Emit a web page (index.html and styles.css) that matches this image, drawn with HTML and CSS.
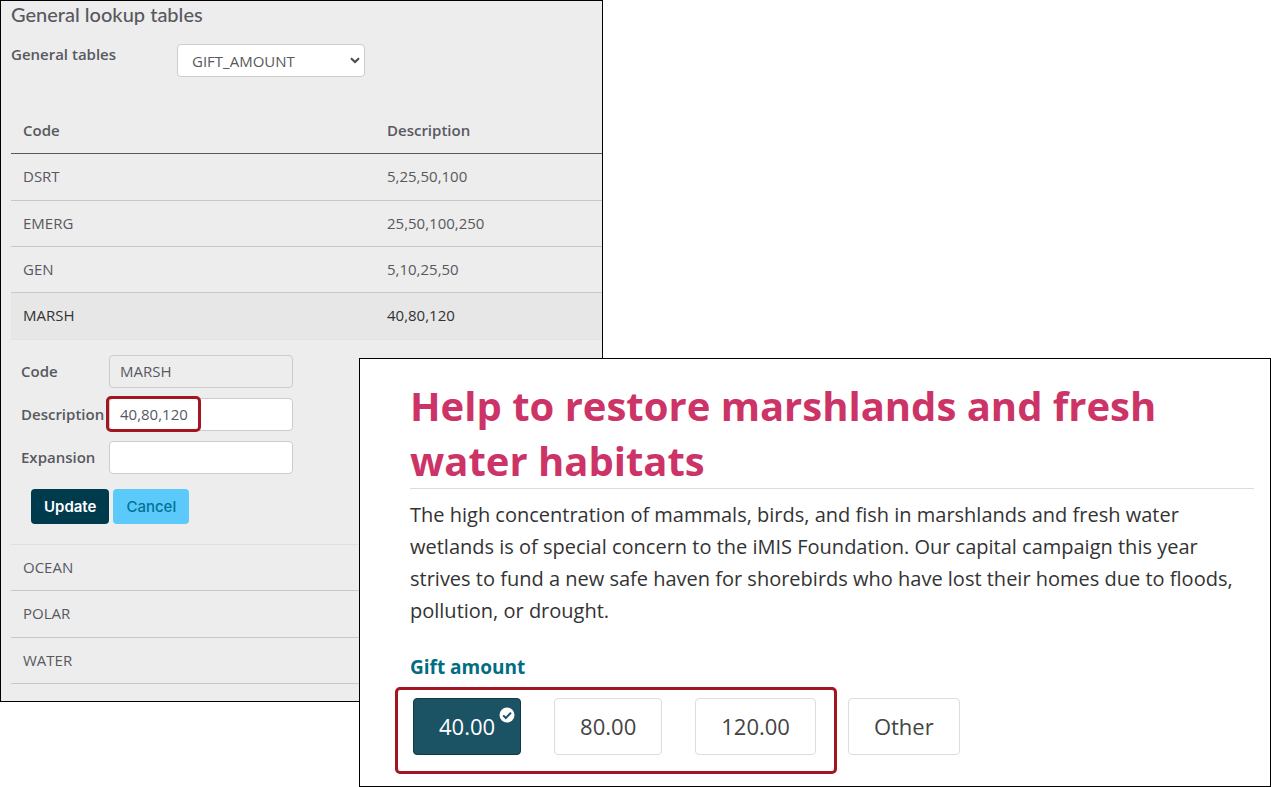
FILE: index.html
```html
<!DOCTYPE html>
<html lang="en">
<head>
<meta charset="utf-8">
<title>General lookup tables</title>
<link rel="stylesheet" href="styles.css">
</head>
<body>
<main class="stage">
  <section class="window admin">
    <h2 class="admin-title">General lookup tables</h2>
    <div class="picker">
      <label class="label" for="table-name">General tables</label>
      <div class="select-wrap">
        <select class="field select" id="table-name"><option>GIFT_AMOUNT</option></select>
        <svg class="chevron" viewBox="0 0 10 7" aria-hidden="true"><path d="M1 1.2 5 5l4-3.8"/></svg>
      </div>
    </div>
    <table class="lookup">
      <thead>
        <tr><th class="code-col">Code</th><th>Description</th></tr>
      </thead>
      <tbody>
        <tr><td>DSRT</td><td>5,25,50,100</td></tr>
        <tr><td>EMERG</td><td>25,50,100,250</td></tr>
        <tr><td>GEN</td><td>5,10,25,50</td></tr>
        <tr class="selected"><td>MARSH</td><td>40,80,120</td></tr>
        <tr class="edit-row">
          <td colspan="2">
            <form class="edit-form">
              <div class="form-line">
                <label class="label" for="code">Code</label>
                <div class="field-wrap"><input class="field" id="code" type="text" value="MARSH" readonly></div>
              </div>
              <div class="form-line">
                <label class="label" for="description">Description</label>
                <div class="field-wrap">
                  <input class="field" id="description" type="text" value="40,80,120">
                  <span class="callout field-callout"></span>
                </div>
              </div>
              <div class="form-line">
                <label class="label" for="expansion">Expansion</label>
                <div class="field-wrap"><input class="field" id="expansion" type="text"></div>
              </div>
              <div class="actions">
                <button class="btn btn-primary" type="button">Update</button>
                <button class="btn btn-secondary" type="button">Cancel</button>
              </div>
            </form>
          </td>
        </tr>
        <tr><td>OCEAN</td><td></td></tr>
        <tr><td>POLAR</td><td></td></tr>
        <tr><td>WATER</td><td></td></tr>
      </tbody>
    </table>
  </section>

  <section class="window campaign">
    <h1 class="campaign-title">Help to restore marshlands and fresh water habitats</h1>
    <p class="campaign-text">The high concentration of mammals, birds, and fish in marshlands and fresh water wetlands is of special concern to the iMIS Foundation. Our capital campaign this year strives to fund a new safe haven for shorebirds who have lost their homes due to floods, pollution, or drought.</p>
    <fieldset class="gift">
      <legend class="gift-title">Gift amount</legend>
      <div class="amounts">
        <div class="callout amount-callout">
          <label class="amount"><input type="radio" name="amount" checked>40.00
            <svg class="tick" viewBox="0 0 16 16" aria-hidden="true"><circle cx="8" cy="8" r="7.5"/><path d="M4.2 8.4 6.8 11l5.2-5.4"/></svg>
          </label>
          <label class="amount"><input type="radio" name="amount">80.00</label>
          <label class="amount"><input type="radio" name="amount">120.00</label>
        </div>
        <label class="amount"><input type="radio" name="amount">Other</label>
      </div>
    </fieldset>
  </section>
</main>
</body>
</html>
```
FILE: styles.css
```css
* {
  box-sizing: border-box;
}

body {
  margin: 0;
  background: #fff;
  color: #58595f;
  font: 15px/22px "Open Sans", "Noto Sans", sans-serif;
}

/* Two windows share one grid row and overlap in the middle column. */
.stage {
  display: grid;
  grid-template-columns: 359fr 244fr 668fr;
  align-items: start;
}

.window {
  grid-row: 1;
  min-width: 0;
  border: 1px solid #000;
}

.admin {
  grid-column: 1 / 3;
  padding: 0 0 17px 10px;
  background: #ededed;
}

.admin-title {
  margin: 0;
  font: 500 20px/26px Lato, sans-serif;
}

.label,
.lookup th {
  font-weight: 600;
}

.picker {
  display: flex;
  gap: 16px;
  padding: 17px 0 29px;
}

.picker .label {
  width: 150px;
  line-height: 20px;
}

.select-wrap {
  position: relative;
  width: 188px;
}

.field {
  display: block;
  width: 100%;
  height: 33px;
  padding: 0 10px 2px;
  border: 1px solid #ccc;
  border-radius: 4px;
  background: #fff;
  color: #58595f;
  font: inherit;
}

.field[readonly] {
  background: #ededed;
}

.select {
  appearance: none;
  padding: 0 14px;
}

.chevron {
  position: absolute;
  top: 13px;
  right: 5px;
  width: 10px;
  height: 7px;
  fill: none;
  stroke: #454952;
  stroke-width: 2;
}

.lookup {
  width: 100%;
  border-spacing: 0;
  table-layout: fixed;
}

.lookup th,
.lookup td {
  height: 46px;
  padding: 0 12px;
  border-bottom: 1px solid #c8c8c8;
  text-align: left;
}

.lookup td {
  padding-bottom: 2px;
}

.lookup tr:nth-child(3n + 1) td {
  height: 47px;
}

.lookup th {
  height: 48px;
  border-bottom-color: #58595f;
}

.lookup .code-col {
  width: 364px;
}

.lookup .selected td {
  border-bottom-color: #e3e3e3;
  background: #e7e7e7;
  color: #333;
}

.lookup .edit-row td {
  padding: 15px 10px 20px;
  border-bottom-color: #e0e0e0;
}

.edit-form {
  display: grid;
  gap: 10px;
}

.form-line {
  display: flex;
  align-items: center;
}

.form-line .label {
  width: 88px;
  padding-bottom: 2px;
}

.field-wrap {
  position: relative;
  width: 184px;
}

.callout {
  border: 3px solid #a31621;
  border-radius: 5px;
}

.field-callout {
  position: absolute;
  top: -2px;
  left: -3px;
  width: 95px;
  height: 36px;
  pointer-events: none;
}

.actions {
  display: flex;
  gap: 4px;
  padding: 5px 10px 0;
}

.btn {
  height: 35px;
  padding: 0 13px;
  border: 0;
  border-radius: 4px;
  font: 500 15px/20px Inter, sans-serif;
}

.btn-primary {
  background: #003a4d;
  color: #fff;
  font-weight: 600;
}

.btn-secondary {
  background: #5bcafa;
  color: #007396;
}

.campaign {
  grid-column: 2 / 4;
  margin-top: 358px;
  padding: 19px 16px 12px 50px;
  background: #fff;
  color: #333;
}

.campaign-title {
  margin: 0 0 10px;
  border-bottom: 1px solid #ddd;
  color: #cc3366;
  font-size: 40px;
  font-weight: 700;
  line-height: 55px;
}

.campaign-text {
  margin: 0;
  font-size: 20px;
  line-height: 32px;
}

.gift {
  margin: 24px 0 0;
  padding: 0;
  border: 0;
}

.gift-title {
  padding: 0;
  color: #006d83;
  font-size: 19px;
  font-weight: 700;
  line-height: 32px;
}

.amounts {
  display: flex;
  align-items: center;
  gap: 11px;
  margin: 4px 0 0 -15px;
}

.amount-callout {
  display: flex;
  gap: 33px;
  padding: 8px 18px 16px 15px;
}

.amounts > .amount {
  margin-bottom: 8px;
}

.amount {
  position: relative;
  padding: 0 25px;
  border: 1px solid #ddd;
  border-radius: 4px;
  color: #444;
  font-size: 22px;
  line-height: 55px;
}

.amount input {
  position: absolute;
  opacity: 0;
}

.amount:has(input:checked) {
  border-color: #0f3a48;
  background: #1b5365;
  color: #fff;
}

.tick {
  position: absolute;
  top: 8px;
  right: 5px;
  width: 16px;
  height: 16px;
  fill: #fff;
}

.tick path {
  fill: none;
  stroke: #1b5365;
  stroke-width: 2;
}
```
